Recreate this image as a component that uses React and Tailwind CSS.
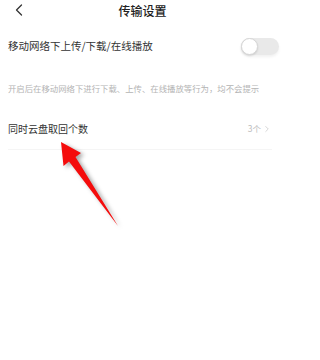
import { ChevronLeft, ChevronRight } from 'lucide-react';

const Arrow = () => (
  <svg
    className="pointer-events-none absolute left-0 top-0"
    width="285"
    height="360"
    viewBox="0 0 285 360"
    style={{ filter: 'drop-shadow(3px 2px 2px rgba(0,0,0,0.35))' }}
  >
    <polygon
      points="61,142 81,153 75.5,157 118,226 69,161.5 63.5,166"
      fill="#f40c0c"
    />
  </svg>
);

const Toggle = () => (
  <div className="relative h-[17px] w-[38px] rounded-full bg-[#e9e9e9] shadow-[0_2px_3px_rgba(0,0,0,0.06)]">
    <div className="absolute left-0 top-0 h-[17px] w-[17px] rounded-full border border-[#d6d6d6] bg-white shadow-[0_1px_2px_rgba(0,0,0,0.12)]" />
  </div>
);

export default function App() {
  return (
    <div
      className="relative h-[360px] w-[285px] overflow-hidden bg-white text-[#333]"
      style={{ fontFamily: '"Noto Sans CJK SC", "Noto Sans", sans-serif' }}
    >
      <header className="relative flex h-[22px] items-center justify-center">
        <ChevronLeft className="absolute left-[9px] top-0 h-[20px] w-[20px] text-[#333]" strokeWidth={1.5} />
        <h1 className="text-[12px] font-medium leading-none text-[#222]">传输设置</h1>
      </header>

      <div className="mt-[9px] flex h-[30px] items-center justify-between pl-[8px] pr-[6px]">
        <span className="text-[10.5px] leading-none">移动网络下上传/下载/在线播放</span>
        <Toggle />
      </div>

      <p className="ml-[8px] mt-[21px] text-[8.4px] leading-[12px] text-[#b4b4b4]">
        开启后在移动网络下进行下载、上传、在线播放等行为，均不会提示
      </p>

      <div className="ml-[8px] mr-[13px] mt-[14px] flex h-[42px] items-center justify-between border-b border-[#f5f5f5]">
        <span className="text-[10px] leading-none">同时云盘取回个数</span>
        <div className="flex items-center gap-[1px] text-[#bdbdbd]">
          <span className="text-[8.5px] leading-none">3个</span>
          <ChevronRight className="h-[10px] w-[10px]" strokeWidth={1.5} />
        </div>
      </div>

      <Arrow />
    </div>
  );
}
